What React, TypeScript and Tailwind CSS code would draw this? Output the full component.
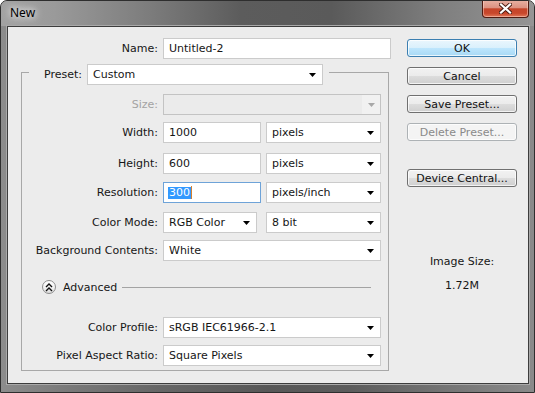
import React from "react";

const Tri = ({ c = "#000" }: { c?: string }) => (
  <svg width="7" height="4" viewBox="0 0 7 4" className="mt-[1px] shrink-0">
    <path d="M0 0H7L3.5 4Z" fill={c} />
  </svg>
);

const Select = ({ text, className }: { text: string; className: string }) => (
  <div
    className={
      "h-[21px] flex items-center justify-between pl-[5px] pr-[6px] bg-white border border-[#cbcbcb] " +
      className
    }
  >
    <span className="whitespace-nowrap">{text}</span>
    <Tri />
  </div>
);

const Input = ({ text, className }: { text: string; className: string }) => (
  <div className={"h-[21px] flex items-center pl-[5px] bg-white border border-[#cbcbcb] " + className}>
    <span className="whitespace-nowrap">{text}</span>
  </div>
);

const Label = ({ text, className, dim }: { text: string; className: string; dim?: boolean }) => (
  <div className={"text-right whitespace-nowrap " + (dim ? "text-[#a3a3a3] " : "") + className}>{text}</div>
);

const Btn = ({ text, kind }: { text: string; kind: "default" | "normal" | "disabled" }) => {
  const cls =
    kind === "default"
      ? "border-[#3c7fb1] bg-[linear-gradient(180deg,#eaf6fd_0%,#d9f0fc_50%,#bee6fd_50%,#a7d9f5_100%)] text-[#111]"
      : kind === "normal"
      ? "border-[#707070] bg-[linear-gradient(180deg,#f2f2f2_0%,#ebebeb_50%,#dddddd_50%,#cfcfcf_100%)] text-[#111]"
      : "border-[#adb2b5] bg-[#f4f4f4] text-[#8a8a8a]";
  return (
    <div
      className={
        "w-[110px] h-[18px] flex items-center justify-center rounded-[3px] border shadow-[inset_0_0_0_1px_rgba(255,255,255,0.75)] " +
        cls
      }
    >
      {text}
    </div>
  );
};

export default function App() {
  return (
    <div className="w-[535px] h-[393px] overflow-hidden rounded-t-[7px] border border-[#2e2e2e] bg-[linear-gradient(90deg,#8c8c8c_0%,#7a7a7a_12%,#666666_30%,#585858_50%,#5c5c5c_65%,#737373_82%,#8a8a8a_100%)] flex flex-col font-['DejaVu_Sans',sans-serif] text-[11px] leading-[13px] text-[#161616]">
      {/* title bar */}
      <div className="h-[25px] flex items-start justify-between bg-[linear-gradient(90deg,#a2a2a2_0%,#9a9a9a_10%,#7c7c7c_28%,#5c5c5c_45%,#5a5a5a_62%,#7e7e7e_82%,#959595_100%)]">
        <div className="pl-[9px] pt-[4px] font-['Noto_Sans',sans-serif] text-[12px] leading-[16px] text-black [text-shadow:0_0_6px_rgba(255,255,255,0.9),0_0_10px_rgba(255,255,255,0.7),0_0_14px_rgba(255,255,255,0.5)]">
          New
        </div>
        <div className="mr-[5px] -mt-[1px] w-[47px] h-[18px] rounded-b-[4px] border border-t-0 border-[#4f1a10] bg-[linear-gradient(180deg,#e8b2a4_0%,#dc9281_45%,#c5452a_52%,#c8472b_78%,#e2785a_100%)] shadow-[inset_0_0_0_1px_rgba(255,230,220,0.45)] flex items-center justify-center">
          <svg width="13" height="11" viewBox="0 0 13 11">
            <path d="M2 1.5L11 9.5M11 1.5L2 9.5" stroke="#4a1c12" strokeWidth="4" strokeLinecap="square" />
            <path d="M2 1.5L11 9.5M11 1.5L2 9.5" stroke="#ffffff" strokeWidth="2.2" strokeLinecap="square" />
          </svg>
        </div>
      </div>

      {/* client area */}
      <div className="ml-[6px] w-[522px] h-[358px] border border-[#3d3d3d] shadow-[0_0_0_1px_#a9a9a9] bg-[#ececec] flex">
        {/* left column */}
        <div className="w-[387px] flex flex-col">
          <div className="mt-[11px] flex items-center">
            <Label text="Name:" className="w-[150px]" />
            <Input text="Untitled-2" className="ml-[5px] w-[228px]" />
          </div>

          <fieldset className="ml-[13px] w-[368px] border border-[#a8a8a8] pb-[4px]">
            <legend className="ml-[7px] pt-[5px] pr-[6px]">
              <div className="flex items-center">
                <Label text="Preset:" className="w-[53px]" />
                <Select text="Custom" className="ml-[5px] w-[236px]" />
              </div>
            </legend>

            <div className="mt-[9px] flex items-center">
              <Label text="Size:" className="w-[136px]" dim />
              <div className="ml-[5px] w-[218px] h-[21px] flex items-center justify-end border border-[#c3c3c3] bg-[#ebebeb]">
                <div className="w-[18px] h-full bg-[#f1f1f1] flex items-center justify-center">
                  <Tri c="#a8a8a8" />
                </div>
              </div>
            </div>

            <div className="mt-[7px] flex items-center">
              <Label text="Width:" className="w-[136px]" />
              <Input text="1000" className="ml-[5px] w-[98px]" />
              <Select text="pixels" className="ml-[5px] w-[115px]" />
            </div>

            <div className="mt-[10px] flex items-center">
              <Label text="Height:" className="w-[136px]" />
              <Input text="600" className="ml-[5px] w-[98px]" />
              <Select text="pixels" className="ml-[5px] w-[115px]" />
            </div>

            <div className="mt-[8px] flex items-center">
              <Label text="Resolution:" className="w-[136px]" />
              <div className="ml-[5px] w-[98px] h-[21px] flex items-center pl-[4px] bg-white border border-[#6ea3d8]">
                <span className="bg-[#3399ff] text-white px-[1px] leading-[12px]">300</span>
                <span className="w-px h-[13px] bg-[#d5802e]" />
              </div>
              <Select text="pixels/inch" className="ml-[5px] w-[115px]" />
            </div>

            <div className="mt-[9px] flex items-center">
              <Label text="Color Mode:" className="w-[136px]" />
              <Select text="RGB Color" className="ml-[5px] w-[94px]" />
              <Select text="8 bit" className="ml-[9px] w-[115px]" />
            </div>

            <div className="mt-[7px] flex items-center">
              <Label text="Background Contents:" className="w-[136px]" />
              <Select text="White" className="ml-[5px] w-[218px]" />
            </div>

            <div className="mt-[19px] h-[14px] flex items-center">
              <div className="ml-[20px] w-[14px] h-[14px] rounded-full border border-[#8e8e8e] bg-[linear-gradient(180deg,#ffffff_0%,#f0f0f0_60%,#dcdcdc_100%)] flex items-center justify-center">
                <svg width="8" height="9" viewBox="0 0 8 9">
                  <path d="M1 4L4 1L7 4M1 8L4 5L7 8" stroke="#111" strokeWidth="1.4" fill="none" />
                </svg>
              </div>
              <div className="ml-[7px]">Advanced</div>
              <div className="ml-[5px] mr-[17px] flex-1 h-px bg-[#a3a3a3]" />
            </div>

            <div className="mt-[23px] flex items-center">
              <Label text="Color Profile:" className="w-[136px]" />
              <Select text="sRGB IEC61966-2.1" className="ml-[5px] w-[218px]" />
            </div>

            <div className="mt-[7px] flex items-center">
              <Label text="Pixel Aspect Ratio:" className="w-[136px]" />
              <Select text="Square Pixels" className="ml-[5px] w-[218px]" />
            </div>
          </fieldset>
        </div>

        {/* right column */}
        <div className="pl-[12px] flex flex-col">
          <div className="mt-[12px]">
            <Btn text="OK" kind="default" />
          </div>
          <div className="mt-[10px]">
            <Btn text="Cancel" kind="normal" />
          </div>
          <div className="mt-[10px]">
            <Btn text="Save Preset..." kind="normal" />
          </div>
          <div className="mt-[10px]">
            <Btn text="Delete Preset..." kind="disabled" />
          </div>
          <div className="mt-[28px]">
            <Btn text="Device Central..." kind="normal" />
          </div>
          <div className="mt-[68px] w-[110px] text-center">Image Size:</div>
          <div className="mt-[11px] w-[110px] text-center">1.72M</div>
        </div>
      </div>
    </div>
  );
}
